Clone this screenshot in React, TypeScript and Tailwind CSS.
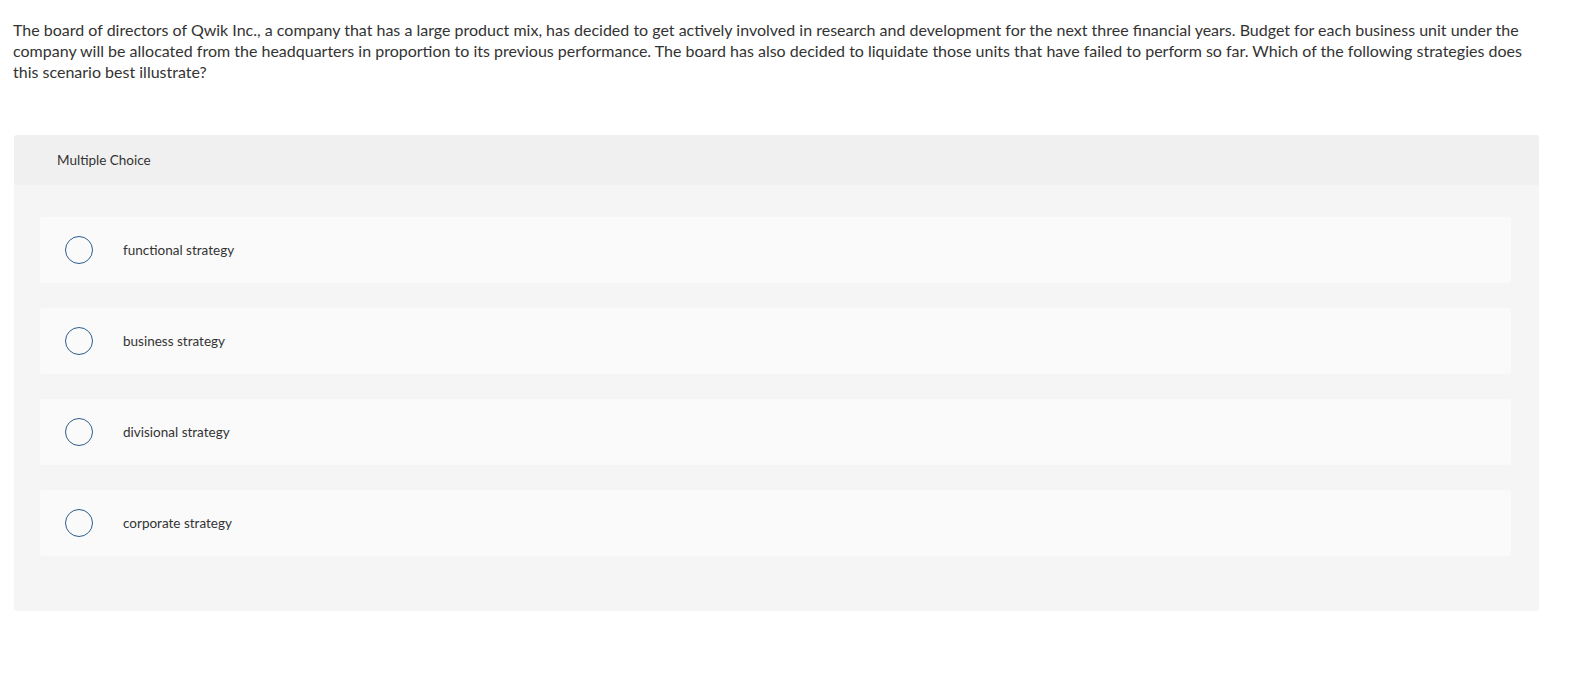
import React from "react";

const options = ["functional strategy", "business strategy", "divisional strategy", "corporate strategy"];

export default function App() {
  return (
    <div className="min-h-[686px] bg-white text-[#333333]" style={{ fontFamily: "Lato, 'Open Sans', sans-serif" }}>
      <div className="pl-[13px] pr-[20px] pt-[19px]">
        <p className="text-[16px] leading-[21px]">
          <span className="block whitespace-nowrap">The board of directors of Qwik Inc., a company that has a large product mix, has decided to get actively involved in research and development for the next three financial years. Budget for each business unit under the</span>
          <span className="block whitespace-nowrap">company will be allocated from the headquarters in proportion to its previous performance. The board has also decided to liquidate those units that have failed to perform so far. Which of the following strategies does</span>
          <span className="block whitespace-nowrap">this scenario best illustrate?</span>
        </p>
      </div>
      <div className="ml-[14px] mt-[53px] w-[1525px] rounded-[3px] bg-[#f5f5f5] overflow-hidden">
        <div className="h-[50px] bg-[#f0f0f0] flex items-center pl-[43px] text-[13.5px]">Multiple Choice</div>
        <div className="pl-[26px] pr-[28px] pt-[32px] pb-[55px] flex flex-col gap-[25px]">
          {options.map((o) => (
            <div key={o} className="h-[66px] rounded-[3px] bg-[#fafafa] flex items-center pl-[25px]">
              <span className="w-[28px] h-[28px] rounded-full border-[1.5px] border-[#2c5d8a] shrink-0" />
              <span className="ml-[30px] text-[13.5px]">{o}</span>
            </div>
          ))}
        </div>
      </div>
    </div>
  );
}
